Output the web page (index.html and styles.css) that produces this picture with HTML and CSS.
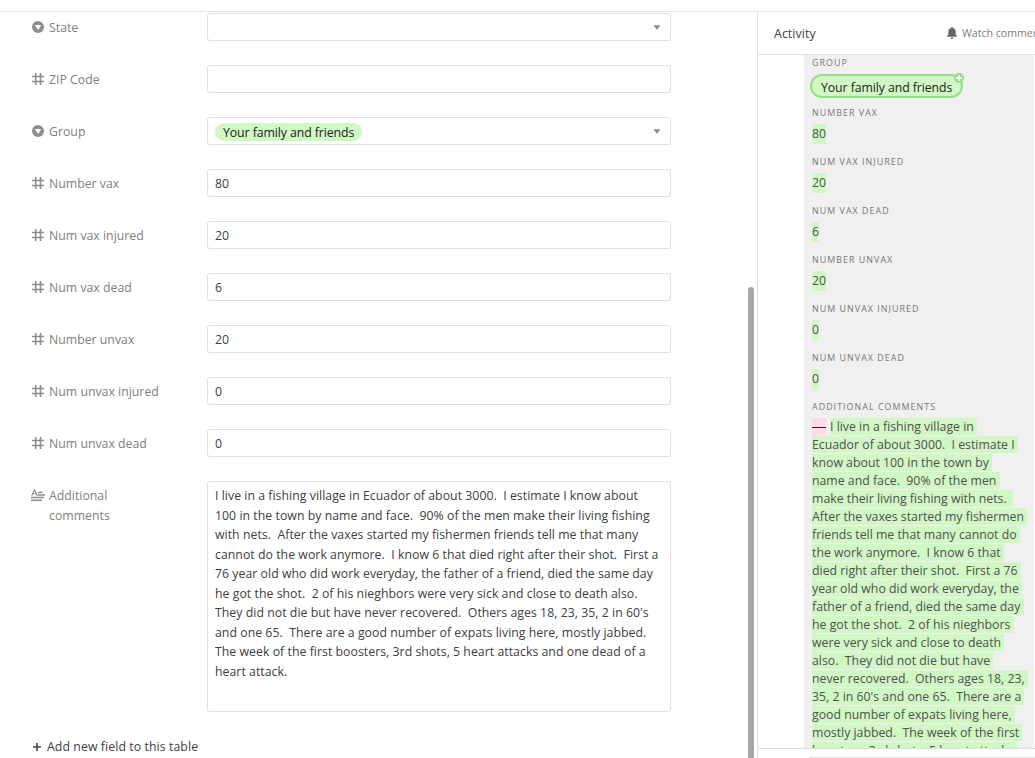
FILE: index.html
```html
<!DOCTYPE html>
<html lang="en">
<head>
    <meta charset="UTF-8">
    <meta name="viewport" content="width=device-width, initial-scale=1.0">
    <title>Record</title>
    <link rel="stylesheet" href="styles.css">
</head>
<body>
    <svg width="0" height="0" class="defs">
        <symbol id="select" viewBox="0 0 12 12">
            <circle cx="6" cy="6" r="6" fill="#8e8e8e"/>
            <path d="M2.8 4h6.4L6 9z" fill="#fff"/>
        </symbol>
        <symbol id="number" viewBox="0 0 12 12">
            <path d="M3.7 0v12M8.5 0v12M0 3.5h12M0 8.5h12" stroke="#8e8e8e" stroke-width="1.6" fill="none"/>
        </symbol>
        <symbol id="caret" viewBox="0 0 8 5">
            <path d="M0.4 0.3h7.2L4 4.8z" fill="#8a8a8a"/>
        </symbol>
    </svg>
    <div class="topbar"></div>
    <div class="main">
        <div class="form">
            <div class="row">
                <div class="label"><svg class="icon"><use href="#select"/></svg><span>State</span></div>
                <div class="field"><svg class="caret"><use href="#caret"/></svg></div>
            </div>
            <div class="row">
                <div class="label"><svg class="icon"><use href="#number"/></svg><span>ZIP Code</span></div>
                <div class="field"></div>
            </div>
            <div class="row">
                <div class="label"><svg class="icon"><use href="#select"/></svg><span>Group</span></div>
                <div class="field"><span class="pill">Your family and friends</span><svg class="caret"><use href="#caret"/></svg></div>
            </div>
            <div class="row">
                <div class="label"><svg class="icon"><use href="#number"/></svg><span>Number vax</span></div>
                <div class="field">80</div>
            </div>
            <div class="row">
                <div class="label"><svg class="icon"><use href="#number"/></svg><span>Num vax injured</span></div>
                <div class="field">20</div>
            </div>
            <div class="row">
                <div class="label"><svg class="icon"><use href="#number"/></svg><span>Num vax dead</span></div>
                <div class="field">6</div>
            </div>
            <div class="row">
                <div class="label"><svg class="icon"><use href="#number"/></svg><span>Number unvax</span></div>
                <div class="field">20</div>
            </div>
            <div class="row">
                <div class="label"><svg class="icon"><use href="#number"/></svg><span>Num unvax injured</span></div>
                <div class="field">0</div>
            </div>
            <div class="row">
                <div class="label"><svg class="icon"><use href="#number"/></svg><span>Num unvax dead</span></div>
                <div class="field">0</div>
            </div>
            <div class="row">
                <div class="label">
                    <svg class="icon long" viewBox="0 0 14 12">
                        <path d="M0.7 7L3.5 0.6L6.3 7M1.8 4.8h3.4" stroke="#8e8e8e" stroke-width="1.1" fill="none"/>
                        <path d="M7 3.5h4.5M7 6h7M0 8.5h13M0 11.2h11" stroke="#8e8e8e" stroke-width="1.5" fill="none"/>
                    </svg>
                    <span>Additional<br>comments</span>
                </div>
                <div class="textarea">I live in a fishing village in Ecuador of about 3000.  I estimate I know about
100 in the town by name and face.  90% of the men make their living fishing
with nets.  After the vaxes started my fishermen friends tell me that many
cannot do the work anymore.  I know 6 that died right after their shot.  First a
76 year old who did work everyday, the father of a friend, died the same day
he got the shot.  2 of his nieghbors were very sick and close to death also.
They did not die but have never recovered.  Others ages 18, 23, 35, 2 in 60's
and one 65.  There are a good number of expats living here, mostly jabbed.
The week of the first boosters, 3rd shots, 5 heart attacks and one dead of a
heart attack.</div>
            </div>
            <div class="add">
                <svg width="8" height="8" viewBox="0 0 8 8"><path d="M4 0v8M0 4h8" stroke="#444" stroke-width="1.6"/></svg>
                <span>Add new field to this table</span>
            </div>
        </div>
        <div class="track"><div class="thumb"></div></div>
        <div class="side">
            <div class="sidehead">
                <span class="title">Activity</span>
                <svg class="bell" viewBox="0 0 10 12">
                    <path d="M5 0c.6 0 .9.4.9.9C7.8 1.3 8.7 2.8 8.7 4.6V7.5L10 9.3V9.8H0V9.3L1.3 7.5V4.6C1.3 2.8 2.2 1.3 4.1.9C4.1.4 4.4 0 5 0zM3.6 10.5h2.8C6.3 11.4 5.8 12 5 12S3.7 11.4 3.6 10.5z" fill="#666"/>
                </svg>
                <span class="watch">Watch comments</span>
            </div>
            <div class="feed">
                <div class="changes">
                    <h4 class="first">GROUP</h4>
                    <div class="tag">
                        <span>Your family and friends</span>
                        <svg class="plus" viewBox="0 0 10 10"><circle cx="5" cy="5" r="5" fill="#93e088"/><path d="M5 2v6M2 5h6" stroke="#fff" stroke-width="1.8"/></svg>
                    </div>
                    <h4>NUMBER VAX</h4>
                    <p><ins>80</ins></p>
                    <h4>NUM VAX INJURED</h4>
                    <p><ins>20</ins></p>
                    <h4>NUM VAX DEAD</h4>
                    <p><ins>6</ins></p>
                    <h4>NUMBER UNVAX</h4>
                    <p><ins>20</ins></p>
                    <h4>NUM UNVAX INJURED</h4>
                    <p><ins>0</ins></p>
                    <h4>NUM UNVAX DEAD</h4>
                    <p><ins>0</ins></p>
                    <h4>ADDITIONAL COMMENTS</h4>
                    <div class="diff"><del></del><ins>I live in a fishing village in 
Ecuador of about 3000.  I estimate I 
know about 100 in the town by 
name and face.  90% of the men 
make their living fishing with nets.  
After the vaxes started my fishermen 
friends tell me that many cannot do 
the work anymore.  I know 6 that 
died right after their shot.  First a 76 
year old who did work everyday, the 
father of a friend, died the same day 
he got the shot.  2 of his nieghbors 
were very sick and close to death 
also.  They did not die but have 
never recovered.  Others ages 18, 23, 
35, 2 in 60's and one 65.  There are a 
good number of expats living here, 
mostly jabbed.  The week of the first 
boosters, 3rd shots, 5 heart attacks </ins></div>
                </div>
            </div>
            <div class="sidefoot"><div class="comment"></div></div>
        </div>
    </div>
</body>
</html>
```
FILE: styles.css
```css
*{
    box-sizing: border-box;
}
body{
    margin: 0;
    height: 758px;
    overflow: hidden;
    background: #fff;
    color: #404040;
    font-family: "Open Sans", "Noto Sans", sans-serif;
    font-size: 12.3px;
    display: flex;
    flex-direction: column;
}
.defs{
    position: absolute;
}
.topbar{
    flex: none;
    height: 12px;
    border-bottom: 1px solid #e3e3e3;
}
.main{
    flex: 1;
    min-height: 0;
    display: flex;
}
.form{
    width: 748px;
    padding: 1px 0 0 31px;
    overflow: hidden;
}
.row{
    display: flex;
    margin-bottom: 24px;
}
.label{
    width: 176px;
    display: flex;
    align-items: flex-start;
    padding-top: 5px;
    line-height: 20px;
    color: #808080;
}
.icon{
    width: 12px;
    height: 12px;
    margin: 3px 5px 0 1px;
}
.icon.long{
    width: 14px;
    margin: 3px 4px 0 0;
}
.field{
    width: 464px;
    height: 28px;
    display: flex;
    align-items: center;
    padding: 1px 9px 0 7px;
    border: 1px solid #e0e0e0;
    border-radius: 3px;
}
.caret{
    width: 8px;
    height: 5px;
    margin-left: auto;
}
.pill{
    width: 147px;
    height: 18px;
    line-height: 19px;
    padding-left: 8px;
    border-radius: 9px;
    background: #d1f7c4;
    color: #222;
    letter-spacing: -0.08px;
    white-space: nowrap;
}
.textarea{
    width: 464px;
    height: 231px;
    padding: 4px 7px;
    border: 1px solid #e0e0e0;
    border-radius: 3px;
    line-height: 19.5px;
    letter-spacing: 0.03px;
    white-space: pre;
}
.add{
    display: flex;
    align-items: center;
    gap: 6px;
    padding: 1px 0 0 2px;
    line-height: 20px;
    letter-spacing: 0.08px;
}
.track{
    width: 9px;
    padding-top: 275px;
}
.thumb{
    width: 6px;
    height: 100%;
    border-radius: 3px 3px 0 0;
    background: #a8a8a8;
}
.side{
    width: 278px;
    display: flex;
    flex-direction: column;
    border-left: 1px solid #e0e0e0;
    overflow: hidden;
}
.sidehead{
    flex: none;
    height: 43px;
    display: flex;
    align-items: center;
    padding-left: 16px;
    border-bottom: 1px solid #e0e0e0;
    white-space: nowrap;
}
.title{
    flex: none;
    width: 173px;
    letter-spacing: 0.1px;
}
.bell{
    flex: none;
    width: 10px;
    height: 12px;
}
.watch{
    margin-left: 5px;
    font-size: 10.6px;
    color: #808080;
}
.feed{
    flex: 1;
    min-height: 0;
    overflow: hidden;
}
.changes{
    width: 230px;
    margin-left: 46px;
    padding-left: 8px;
    background: #f0f0f0;
}
h4{
    margin: 0;
    padding-top: 7px;
    height: 21px;
    font-size: 8.9px;
    line-height: 13px;
    font-weight: 500;
    letter-spacing: 1.04px;
    color: #777;
}
h4.first{
    padding-top: 1px;
    height: 19px;
}
.tag{
    position: relative;
    width: 153px;
    height: 24px;
    margin: 0 0 1px -2px;
    border: 2px solid #93e088;
    border-radius: 12px;
    background: #d1f7c4;
    padding: 1px 0 0 9px;
    letter-spacing: -0.08px;
    color: #222;
    white-space: nowrap;
}
.tag span{
    display: block;
    line-height: 21px;
}
.plus{
    position: absolute;
    top: -3px;
    right: -3px;
    width: 10px;
    height: 10px;
}
p{
    margin: 0;
    height: 28px;
    padding-top: 4px;
    line-height: 20px;
}
ins{
    text-decoration: none;
    background: #d1f7c4;
    color: #505050;
}
p ins{
    display: inline-block;
    height: 20px;
}
.diff{
    margin-top: 4px;
    white-space: pre;
    line-height: 18px;
}
del{
    display: inline-block;
    width: 14px;
    height: 17px;
    margin-right: 4px;
    vertical-align: -4px;
    background: linear-gradient(#4c0c1c, #4c0c1c) 0 9px / 14px 1px no-repeat #ffdce5;
}
.sidefoot{
    flex: none;
    height: 10px;
    padding: 8px 0 0 51px;
    border-top: 1px solid #e0e0e0;
}
.comment{
    border-top: 1px solid #ddd;
}
```
